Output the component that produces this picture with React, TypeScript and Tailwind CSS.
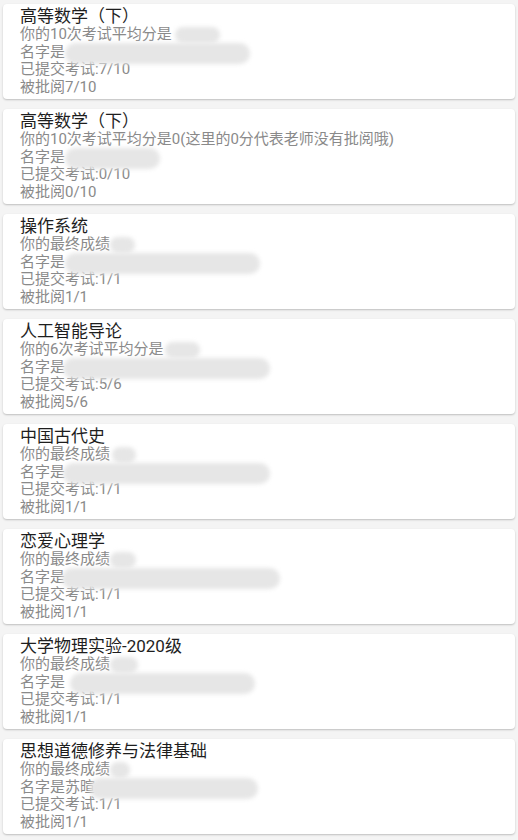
type Course = {
  title: string;
  avg: string;
  name: string;
  submitted: string;
  reviewed: string;
  b1?: [number, number];
  b2: [number, number];
};

const courses: Course[] = [
  { title: "高等数学（下）", avg: "你的10次考试平均分是", name: "名字是", submitted: "已提交考试:7/10", reviewed: "被批阅7/10", b1: [155, 45], b2: [45, 185] },
  { title: "高等数学（下）", avg: "你的10次考试平均分是0(这里的0分代表老师没有批阅哦)", name: "名字是", submitted: "已提交考试:0/10", reviewed: "被批阅0/10", b2: [45, 95] },
  { title: "操作系统", avg: "你的最终成绩", name: "名字是", submitted: "已提交考试:1/1", reviewed: "被批阅1/1", b1: [90, 25], b2: [45, 195] },
  { title: "人工智能导论", avg: "你的6次考试平均分是", name: "名字是", submitted: "已提交考试:5/6", reviewed: "被批阅5/6", b1: [145, 35], b2: [43, 207] },
  { title: "中国古代史", avg: "你的最终成绩", name: "名字是", submitted: "已提交考试:1/1", reviewed: "被批阅1/1", b1: [92, 24], b2: [43, 207] },
  { title: "恋爱心理学", avg: "你的最终成绩", name: "名字是", submitted: "已提交考试:1/1", reviewed: "被批阅1/1", b1: [90, 26], b2: [42, 218] },
  { title: "大学物理实验-2020级", avg: "你的最终成绩", name: "名字是", submitted: "已提交考试:1/1", reviewed: "被批阅1/1", b1: [90, 28], b2: [50, 185] },
  { title: "思想道德修养与法律基础", avg: "你的最终成绩", name: "名字是苏暄", submitted: "已提交考试:1/1", reviewed: "被批阅1/1", b1: [90, 20], b2: [70, 168] },
];

function Blob({ at, tall }: { at: [number, number]; tall?: boolean }) {
  return (
    <span
      className={`absolute rounded-full bg-[#e6e6e6] blur-[2px] ${tall ? "top-[-1px] h-[21px]" : "top-[1px] h-[16px]"}`}
      style={{ left: at[0], width: at[1] }}
    />
  );
}

function Card({ c }: { c: Course }) {
  return (
    <div className="h-[95px] rounded-[4px] bg-white px-[17px] pt-[2px] shadow-[0_1px_2px_rgba(0,0,0,0.22)]">
      <div className="h-[20px] text-[17px] leading-[20px] text-[#1e1e1e]">{c.title}</div>
      <div className="text-[15px] leading-[17.6px] text-[#8a8a8a]">
        <div className="relative whitespace-nowrap">
          {c.avg}
          {c.b1 && <Blob at={c.b1} />}
        </div>
        <div className="relative whitespace-nowrap">
          {c.name}
          <Blob at={c.b2} tall />
        </div>
        <div>{c.submitted}</div>
        <div>{c.reviewed}</div>
      </div>
    </div>
  );
}

export default function App() {
  return (
    <main
      className="flex min-h-[840px] w-full flex-col gap-[10px] bg-[#f4f4f4] px-[3px] pt-[4px] pb-2"
      style={{ fontFamily: 'Roboto, "Noto Sans CJK SC", sans-serif' }}
    >
      {courses.map((c, i) => (
        <Card key={i} c={c} />
      ))}
    </main>
  );
}
